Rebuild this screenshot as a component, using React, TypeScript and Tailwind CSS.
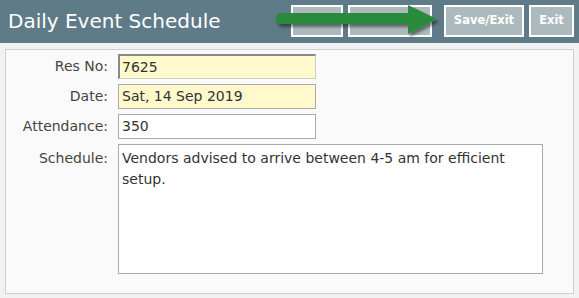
const font = { fontFamily: "Verdana, 'DejaVu Sans', sans-serif" };

function Field({
  label,
  value,
  yellow,
  inset,
}: {
  label: string;
  value: string;
  yellow?: boolean;
  inset?: boolean;
}) {
  return (
    <div className="flex items-center h-[25px]">
      <label className="w-[102px] text-right text-[14px] text-[#444]">{label}</label>
      <div
        className={
          "ml-[10px] w-[198px] h-[25px] flex items-center px-[3px] text-[14px] text-[#333] border " +
          (yellow ? "bg-[#fff9cc] " : "bg-white ") +
          (inset ? "border-[#ccc] border-t-[#888] border-l-[#888] border-t-2 border-l-2 pl-[2px]" : "border-[#aaa]")
        }
      >
        {value}
      </div>
    </div>
  );
}

function Btn({ label, w, dim }: { label: string; w: string; dim?: boolean }) {
  return (
    <div
      className={
        "h-[32px] flex items-center justify-center border-2 border-white bg-[#adbabd] text-[11.5px] font-bold " +
        w +
        (dim ? " text-[#9aa6a9]" : " text-white")
      }
    >
      {label}
    </div>
  );
}

export default function App() {
  return (
    <div className="w-[579px] h-[298px] bg-[#f2f2f2] overflow-hidden" style={font}>
      <div className="relative h-[43px] bg-[#5f7b88] flex items-center justify-between pl-[8px] pr-[5px]">
        <h1 className="text-[20px] text-white pb-[1px]">Daily Event Schedule</h1>
        <div className="flex items-center gap-[5px] -mt-[1px]">
          <Btn label="Save" w="w-[52px]" dim />
          <Btn label="Save/Print" w="w-[84px]" dim />
          <div className="w-[2px]" />
          <Btn label="Save/Exit" w="w-[80px]" />
          <Btn label="Exit" w="w-[45px]" />
        </div>
        <svg
          className="absolute left-[270px] top-[3px]"
          width="172"
          height="36"
          viewBox="0 0 172 36"
        >
          <defs>
            <filter id="sh" x="-10%" y="-30%" width="130%" height="170%">
              <feDropShadow dx="2" dy="3" stdDeviation="1.6" floodColor="#000" floodOpacity="0.45" />
            </filter>
          </defs>
          <path
            d="M11 10 L138 10 L138 2 L167 16 L138 31 L138 21 L11 21 A5.5 5.5 0 0 1 11 10 Z"
            fill="#2b8a3b"
            filter="url(#sh)"
          />
        </svg>
      </div>
      <div className="mx-[5px] mt-[6px] h-[245px] border border-[#cfcfcf] bg-[#fafafa] pt-[4px] flex flex-col gap-[5px]">
        <Field label="Res No:" value="7625" yellow inset />
        <Field label="Date:" value="Sat, 14 Sep 2019" yellow />
        <Field label="Attendance:" value="350" />
        <div className="flex items-start">
          <label className="w-[102px] text-right text-[14px] text-[#444] pt-[4px]">Schedule:</label>
          <div className="ml-[10px] w-[425px] h-[130px] border border-[#aaa] bg-white px-[3px] pt-[3px] text-[14px] leading-[21px] text-[#333]">
            Vendors advised to arrive between 4-5 am for efficient setup.
          </div>
        </div>
      </div>
    </div>
  );
}
